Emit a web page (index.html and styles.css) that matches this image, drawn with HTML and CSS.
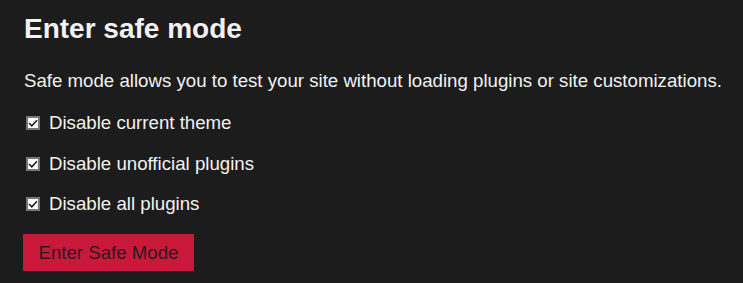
FILE: index.html
```html
<!DOCTYPE html>
<html>
<head>
<meta charset="utf-8">
<link rel="stylesheet" href="styles.css">
</head>
<body>
<div class="panel">
  <h1 class="title">Enter safe mode</h1>
  <p class="desc">Safe mode allows you to test your site without loading plugins or site customizations.</p>
  <label class="opt"><span class="box"><svg width="10" height="8" viewBox="0 0 10 8"><path d="M1 4 L3.8 6.8 L9 1.2" fill="none" stroke="#1c1c1c" stroke-width="1.6"/></svg></span>Disable current theme</label>
  <label class="opt"><span class="box"><svg width="10" height="8" viewBox="0 0 10 8"><path d="M1 4 L3.8 6.8 L9 1.2" fill="none" stroke="#1c1c1c" stroke-width="1.6"/></svg></span>Disable unofficial plugins</label>
  <label class="opt"><span class="box"><svg width="10" height="8" viewBox="0 0 10 8"><path d="M1 4 L3.8 6.8 L9 1.2" fill="none" stroke="#1c1c1c" stroke-width="1.6"/></svg></span>Disable all plugins</label>
  <button class="btn">Enter Safe Mode</button>
</div>
</body>
</html>
```
FILE: styles.css
```css
html, body {
  margin: 0;
  background: #1c1c1c;
}
.panel {
  padding: 13px 8px 0 24px;
  font-family: "Liberation Sans", Arial, sans-serif;
  color: #f2f2f2;
  display: flex;
  flex-direction: column;
  align-items: flex-start;
}
.title {
  margin: 0;
  font-size: 28px;
  font-weight: bold;
  line-height: 32px;
}
.desc {
  margin: 25px 0 0 0;
  font-size: 18.67px;
  line-height: 22px;
  white-space: nowrap;
}
.opt {
  display: flex;
  align-items: center;
  gap: 9px;
  font-size: 18.67px;
  line-height: 22px;
  margin-top: 20px;
  padding-left: 2px;
}
.opt + .opt {
  margin-top: 18.7px;
}
.box {
  width: 10px;
  height: 10px;
  border: 2px solid #767676;
  background: #fff;
  display: flex;
  align-items: center;
  justify-content: center;
}
.btn {
  margin: 19px 0 0 -1px;
  width: 171px;
  height: 37px;
  border: none;
  background: #c8193a;
  color: #2a1a1d;
  font-family: "Liberation Sans", Arial, sans-serif;
  font-size: 18.67px;
  padding: 0;
}
```
